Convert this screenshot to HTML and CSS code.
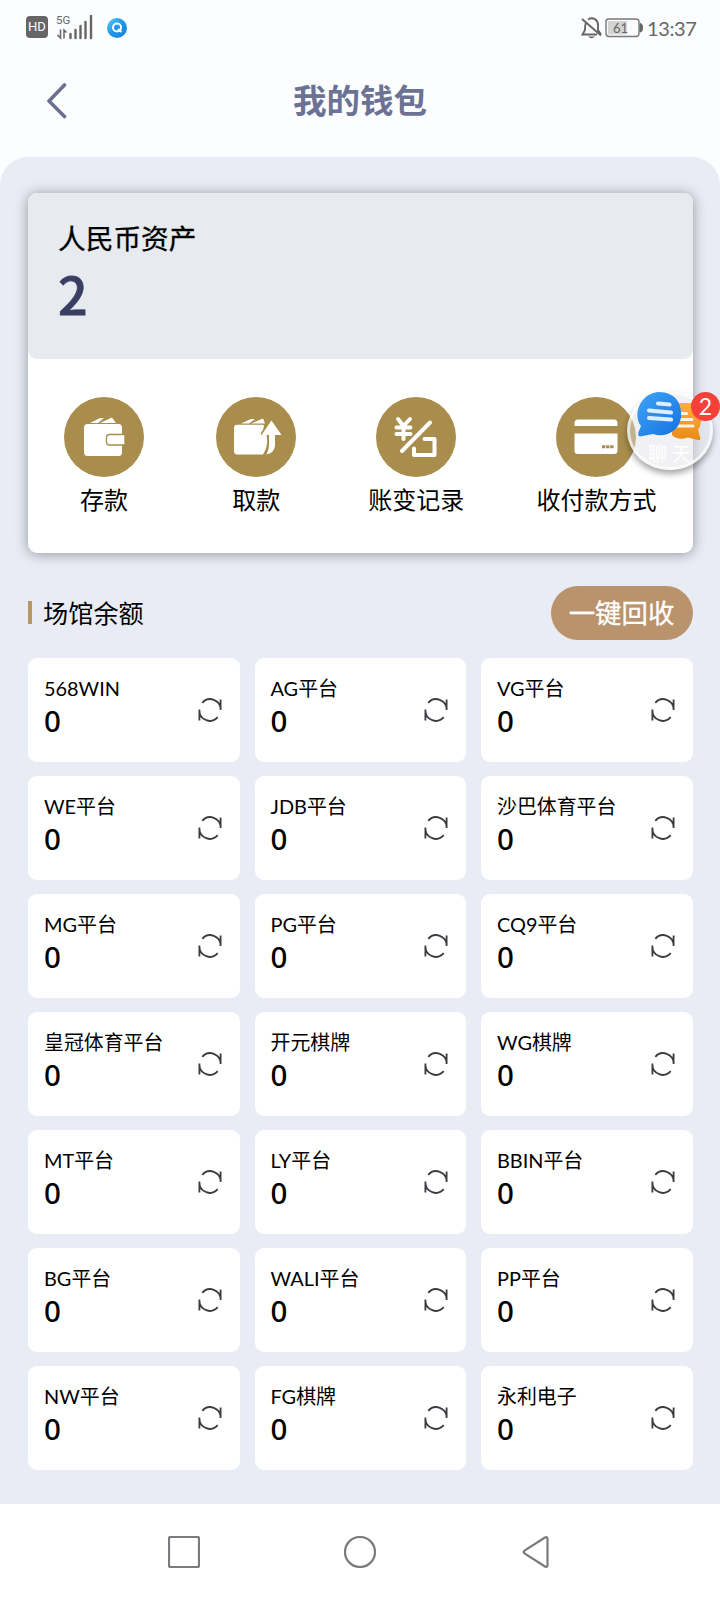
FILE: index.html
```html
<!DOCTYPE html>
<html lang="zh-CN">
<head>
<meta charset="utf-8">
<title>我的钱包</title>
<link rel="stylesheet" href="styles.css">
</head>
<body>
<svg class="defs" aria-hidden="true">
  <symbol id="refresh" viewBox="0 0 24 24">
    <path d="M4.300 4.800A10.400 10.400 0 0 1 22.600 11.500M19.700 19.200A10.400 10.400 0 0 1 1.400 12.500M22.600 12V1.500M1.400 11.500V22.500" fill="none" stroke="#3c3c40" stroke-width="1.800"/>
  </symbol>
</svg>
<div class="statusbar">
  <div class="status-left">
    <span class="hd">HD</span>
    <span class="signal">
      <span class="net">5G</span>
      <svg class="bars" width="38" height="26" viewBox="0 0 38 26"><path d="M4.500 15.500V24L1.500 21M8 24.500V16L10.500 18.500" fill="none" stroke="#666" stroke-width="1.500"/><path d="M14.500 20V24M19.500 16V24M24.500 12V24M29.500 8V24M35 2V24" stroke="#666" stroke-width="2.400" stroke-linecap="round"/></svg>
    </span>
    <svg class="q" width="20" height="20" viewBox="0 0 20 20"><defs><linearGradient id="qg" x1="0" y1="0" x2="1" y2="1"><stop offset="0" stop-color="#53cdf6"/><stop offset=".5" stop-color="#1e96e8"/><stop offset="1" stop-color="#1280dc"/></linearGradient></defs><circle cx="10" cy="10" r="10" fill="url(#qg)"/><circle cx="10" cy="9.500" r="4" fill="none" stroke="#fff" stroke-width="2"/><path d="M11 11l3.500 3" stroke="#fff" stroke-width="2"/></svg>
  </div>
  <div class="status-right">
    <svg width="22" height="24" viewBox="0 0 22 24" fill="none" stroke="#666" stroke-width="1.900"><path d="M5.500 5.500C4 7.500 4 10 4 14L1.500 18.500H16M7 3.500C12 .5 17 3.500 17 9V14L20 18.500M1 3L20 19.500"/><path d="M7 20.500h7q-3.500 3.500-7 0z" fill="#666" stroke="none"/></svg>
    <svg class="battery" width="38" height="20" viewBox="0 0 38 20"><rect x="1" y="1" width="33" height="17.500" rx="3" fill="none" stroke="#777" stroke-width="1.400"/><rect x="3" y="3" width="19" height="13.500" fill="#d3d3d3"/><path d="M35 5.500q2.500 0 2.500 4.300T35 14z" fill="#666" stroke="#666"/><text x="15.500" y="14.500" text-anchor="middle">61</text></svg>
    <span class="time">13:37</span>
  </div>
</div>
<header class="header">
  <svg class="back" width="22" height="36" viewBox="0 0 22 36"><path d="M18.500 2L3 18L18.500 33.500" fill="none" stroke="#6b7090" stroke-width="3.600" stroke-linecap="round" stroke-linejoin="round"/></svg>
  <h1>我的钱包</h1>
</header>
<main class="main">
  <section class="card">
    <div class="asset">
      <div class="asset-label">人民币资产</div>
      <div class="asset-value">2</div>
    </div>
    <div class="actions">
      <div class="action">
        <svg width="80" height="80" viewBox="0 0 80 80"><circle cx="40" cy="40" r="40" fill="#a88d4d"/><path d="M26 26L36 21H40L34 26zM36 26L48 20.500L52 26z" fill="#fff"/><rect x="20" y="27" width="38" height="32" rx="3.500" fill="#fff"/><path d="M61 37.500H45.500a3 3 0 0 0-3 3v4.500a3 3 0 0 0 3 3H61z" fill="#fff" stroke="#a88d4d" stroke-width="1.300"/></svg>
        <span>存款</span>
      </div>
      <div class="action">
        <svg width="80" height="80" viewBox="0 0 80 80"><circle cx="40" cy="40" r="40" fill="#a88d4d"/><path d="M25 26.500L35 22H39L33 26.500zM35 26.500L47 21.500L49 26.500z" fill="#fff"/><path d="M21 27.800H47.500Q49 30 45 36V38H50.500C52 45 51 52 47 57.500H21.500Q18 57.500 18 54V31Q18 27.800 21 27.800z" fill="#fff"/><path d="M55.500 23.500L65.500 38H59V49Q58 56.500 50 57.500Q53 54 53 47V38H45.500z" fill="#fff"/></svg>
        <span>取款</span>
      </div>
      <div class="action">
        <svg width="80" height="80" viewBox="0 0 80 80"><circle cx="40" cy="40" r="40" fill="#a88d4d"/><g fill="none" stroke="#fff" stroke-width="4" stroke-linecap="round" stroke-linejoin="round"><path d="M22 22L27.500 29L34 22M20.500 30.500H34.500M20.500 37H34.500M27.500 30V42M54 25.500L26 54M48.500 42H58.500V58H38V51.500"/></g></svg>
        <span>账变记录</span>
      </div>
      <div class="action">
        <svg width="80" height="80" viewBox="0 0 80 80"><circle cx="40" cy="40" r="40" fill="#a88d4d"/><path d="M18.500 29V26q0-3.500 3.500-3.500H58q3.500 0 3.500 3.500V29zM18.500 36.500H61.500V53.500q0 3.500-3.500 3.500H22q-3.500 0-3.500-3.500z" fill="#fff"/><path d="M46 49.700H57.500" stroke="#a88d4d" stroke-width="3" stroke-dasharray="3.300 .8"/></svg>
        <span>收付款方式</span>
      </div>
    </div>
  </section>
  <div class="section-head">
    <h2>场馆余额</h2>
    <button class="recycle">一键回收</button>
  </div>
  <section class="grid">
    <div class="cell"><div><p>568WIN</p><b>0</b></div><svg><use href="#refresh"/></svg></div>
    <div class="cell"><div><p>AG平台</p><b>0</b></div><svg><use href="#refresh"/></svg></div>
    <div class="cell"><div><p>VG平台</p><b>0</b></div><svg><use href="#refresh"/></svg></div>
    <div class="cell"><div><p>WE平台</p><b>0</b></div><svg><use href="#refresh"/></svg></div>
    <div class="cell"><div><p>JDB平台</p><b>0</b></div><svg><use href="#refresh"/></svg></div>
    <div class="cell"><div><p>沙巴体育平台</p><b>0</b></div><svg><use href="#refresh"/></svg></div>
    <div class="cell"><div><p>MG平台</p><b>0</b></div><svg><use href="#refresh"/></svg></div>
    <div class="cell"><div><p>PG平台</p><b>0</b></div><svg><use href="#refresh"/></svg></div>
    <div class="cell"><div><p>CQ9平台</p><b>0</b></div><svg><use href="#refresh"/></svg></div>
    <div class="cell"><div><p>皇冠体育平台</p><b>0</b></div><svg><use href="#refresh"/></svg></div>
    <div class="cell"><div><p>开元棋牌</p><b>0</b></div><svg><use href="#refresh"/></svg></div>
    <div class="cell"><div><p>WG棋牌</p><b>0</b></div><svg><use href="#refresh"/></svg></div>
    <div class="cell"><div><p>MT平台</p><b>0</b></div><svg><use href="#refresh"/></svg></div>
    <div class="cell"><div><p>LY平台</p><b>0</b></div><svg><use href="#refresh"/></svg></div>
    <div class="cell"><div><p>BBIN平台</p><b>0</b></div><svg><use href="#refresh"/></svg></div>
    <div class="cell"><div><p>BG平台</p><b>0</b></div><svg><use href="#refresh"/></svg></div>
    <div class="cell"><div><p>WALI平台</p><b>0</b></div><svg><use href="#refresh"/></svg></div>
    <div class="cell"><div><p>PP平台</p><b>0</b></div><svg><use href="#refresh"/></svg></div>
    <div class="cell"><div><p>NW平台</p><b>0</b></div><svg><use href="#refresh"/></svg></div>
    <div class="cell"><div><p>FG棋牌</p><b>0</b></div><svg><use href="#refresh"/></svg></div>
    <div class="cell"><div><p>永利电子</p><b>0</b></div><svg><use href="#refresh"/></svg></div>
  </section>
</main>
<div class="chat">
  <svg width="86" height="60" viewBox="0 0 86 60">
    <defs>
      <linearGradient id="blue" x1="0" y1="0" x2="1" y2="1"><stop offset="0" stop-color="#3fa4f8"/><stop offset="1" stop-color="#1472df"/></linearGradient>
      <linearGradient id="orange" x1="0" y1="0" x2="0" y2="1"><stop offset="0" stop-color="#ffb03a"/><stop offset="1" stop-color="#e98a18"/></linearGradient>
    </defs>
    <path d="M44 12H66Q75 14 74 30Q73 37 71 38.500L73.500 48Q73 49.500 71 49L61 46.500Q51 50 45 44z" fill="url(#orange)"/>
    <path d="M49 22.500H59.500M49 28.500H65M49 35H66" stroke="#fff1dd" stroke-width="3.200" stroke-linecap="round"/>
    <path d="M31 1C50 1 55 14 54 26C52 41 38 47 26 43L13 45.500Q10.500 45 11.500 41L14 35C9 29 9 18 15 10Q21 2 31 1z" fill="url(#blue)"/>
    <path d="M31 12.500L42.500 13.500M22 19.500L44 21.500M22 27L44 28.500" stroke="#dceeff" stroke-width="4.200" stroke-linecap="round"/>
  </svg>
  <span class="chat-text">聊 天</span>
  <span class="badge">2</span>
</div>
<nav class="navbar">
  <svg width="32" height="32" viewBox="0 0 32 32"><rect x="1" y="1" width="30" height="30" rx="1.500"/></svg>
  <svg width="32" height="32" viewBox="0 0 32 32"><circle cx="16" cy="16" r="15"/></svg>
  <svg width="32" height="32" viewBox="0 0 32 32"><path d="M27.500 2Q26.500 .5 25 1.500L4.500 14.500Q3 16 4.500 17.500L25 30.500Q26.500 31.500 27.500 30z"/></svg>
</nav>
</body>
</html>
```
FILE: styles.css
```css
* { box-sizing: border-box; }
body {
  position: relative;
  margin: 0;
  width: 720px;
  height: 1600px;
  overflow: hidden;
  display: flex;
  flex-direction: column;
  background: #fcfdff;
  color: #000;
  font-family: Lato, "Noto Sans CJK SC", sans-serif;
}
h1, h2, p { margin: 0; }
.defs { position: absolute; width: 0; height: 0; }
.statusbar {
  height: 56px;
  flex: none;
  display: flex;
  justify-content: space-between;
  padding: 0 23px 0 26px;
  color: #666;
}
.status-left, .status-right { display: flex; align-items: center; }
.hd {
  width: 22px;
  height: 22px;
  margin-top: -2px;
  border-radius: 4px;
  background: #666;
  color: #fff;
  font: 400 13px/22px Roboto, sans-serif;
  text-align: center;
}
.signal { position: relative; width: 38px; height: 26px; margin: -2px 0 0 8px; }
.net { position: absolute; left: 0; top: 0; font: 400 11.500px/12px Roboto, sans-serif; }
.bars { display: block; }
.q { margin-left: 13px; }
.battery { margin-left: 2px; }
.battery text { font: 13px Lato, sans-serif; fill: #666; }
.time { margin-left: 4px; width: 50px; font-size: 20px; letter-spacing: -.4px; white-space: nowrap; }
.header {
  height: 101px;
  flex: none;
  display: grid;
  grid-template-columns: 100px 1fr 100px;
  align-items: start;
}
.back { margin: 27px 0 0 46px; }
.header h1 {
  padding-top: 20px;
  text-align: center;
  font-size: 33.500px;
  line-height: 48px;
  font-weight: 700;
  color: #6b7293;
}
.main {
  flex: 1;
  padding: 36px 27.500px 0 28px;
  border-radius: 28px 28px 0 0;
  background: #e9ecf5;
}
.card {
  height: 360px;
  border-radius: 9px;
  background: #fff;
  box-shadow: 0 1px 13px rgba(0, 0, 0, .38);
}
.asset {
  height: 166px;
  padding: 26px 30px 0;
  border-radius: 9px;
  background: #e7ebf0;
}
.asset-label { font-size: 27.700px; line-height: 40px; -webkit-text-stroke: .3px #000; }
.asset-value {
  margin-top: 4px;
  font: 500 52px/60px "Noto Sans CJK SC", sans-serif;
  color: #3b3e63;
  -webkit-text-stroke: .8px #3b3e63;
}
.actions { display: flex; justify-content: space-around; padding-top: 38px; }
.action {
  display: flex;
  flex-direction: column;
  align-items: center;
  font-size: 24px;
  line-height: 36px;
  gap: 5px;
}
.section-head {
  display: flex;
  justify-content: space-between;
  align-items: center;
  height: 54px;
  margin-top: 33px;
}
.section-head h2 {
  display: flex;
  align-items: center;
  gap: 11px;
  margin-top: -2px;
  font-size: 25.200px;
  font-weight: 400;
}
.section-head h2::before { content: ""; width: 4px; height: 23px; background: #b39a62; }
.recycle {
  width: 142px;
  height: 54px;
  padding: 0;
  border: 0;
  border-radius: 27px;
  background: #b9936c;
  color: #fff;
  font: 26.400px/52px Lato, "Noto Sans CJK SC", sans-serif;
  -webkit-text-stroke: .3px #fff;
}
.grid {
  display: grid;
  grid-template-columns: repeat(3, 211.500px);
  grid-auto-rows: 104px;
  justify-content: space-between;
  row-gap: 14px;
  margin-top: 18px;
}
.cell {
  display: flex;
  justify-content: space-between;
  align-items: flex-start;
  padding: 15px 18px 0 16px;
  border-radius: 9px;
  background: #fff;
}
.cell p { font-size: 19.900px; line-height: 30px; white-space: nowrap; }
.cell b {
  display: block;
  margin-top: 1px;
  font: 500 29.500px/34px "Noto Sans", sans-serif;
}
.cell svg { width: 24px; height: 24px; flex: none; margin-top: 25px; }
.chat {
  position: absolute;
  left: 627px;
  top: 391px;
  width: 86px;
  height: 79px;
  border: 3px solid rgba(255, 255, 255, .65);
  border-radius: 50%;
  background: rgba(225, 225, 228, .45);
  box-shadow: 0 4px 6px rgba(0, 0, 0, .35);
}
.chat svg { position: absolute; left: -3px; top: -3px; overflow: visible; }
.chat-text {
  position: absolute;
  left: 18px;
  top: 46px;
  color: #fff;
  font-size: 19px;
  line-height: 28px;
  white-space: nowrap;
}
.badge {
  position: absolute;
  left: 61px;
  top: -2px;
  width: 29px;
  height: 29px;
  border-radius: 50%;
  background: #f6403a;
  color: #fff;
  font-size: 23px;
  line-height: 29px;
  text-align: center;
}
.navbar {
  height: 96px;
  flex: none;
  display: flex;
  justify-content: center;
  align-items: center;
  gap: 144px;
  background: #fff;
}
.navbar svg { fill: none; stroke: #7b7b7f; stroke-width: 2.200; }
```
